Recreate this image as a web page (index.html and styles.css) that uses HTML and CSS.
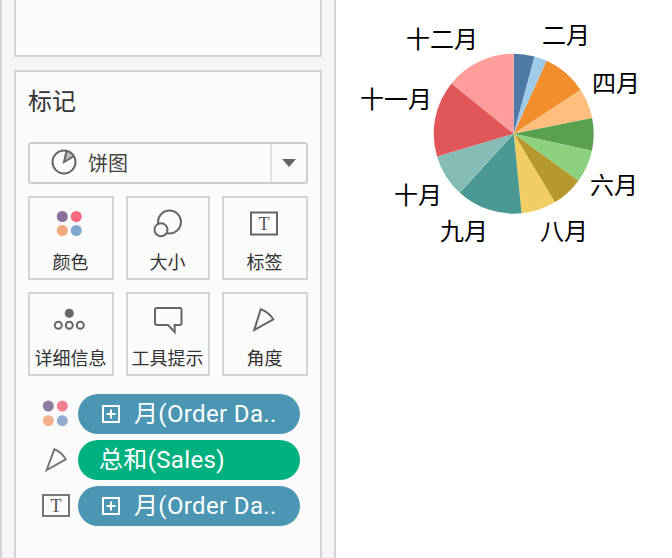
FILE: index.html
```html
<!DOCTYPE html>
<html lang="zh-CN">
<head>
<meta charset="utf-8">
<title>饼图</title>
<link rel="stylesheet" href="styles.css">
</head>
<body>
<aside class="sidebar">
  <div class="card card-top"></div>
  <section class="card card-marks">
    <h2 class="marks-title">标记</h2>
    <div class="select">
      <div class="select-main">
        <svg class="select-icon" width="26" height="26" viewBox="0 0 26 26"><path class="i-fill-light" d="M13 13L15.500 2.300A11 11 0 0 1 22.500 7.500Z"/><circle class="i-line" cx="13" cy="13" r="11.500"/><path class="i-line" d="M15.500 2.300L13 13L22.500 7.500"/></svg>
        <span class="select-text">饼图</span>
      </div>
      <div class="select-arrow"><span class="caret"></span></div>
    </div>
    <div class="btn-grid">
      <div class="mark-btn">
        <svg class="btn-icon" width="40" height="40" viewBox="0 0 40 40"><circle cx="11.300" cy="12.500" r="5.500" fill="#8b6f9b"/><circle cx="25.300" cy="12.500" r="5.500" fill="#f6697f"/><circle cx="11.300" cy="26.500" r="5.500" fill="#f3a97c"/><circle cx="25.300" cy="26.500" r="5.500" fill="#7fa8d0"/></svg>
        <span>颜色</span>
      </div>
      <div class="mark-btn">
        <svg class="btn-icon" width="40" height="40" viewBox="0 0 40 40"><circle class="i-line" cx="21.500" cy="18" r="11.500"/><circle class="i-white" cx="13" cy="25.700" r="6.500"/></svg>
        <span>大小</span>
      </div>
      <div class="mark-btn">
        <svg class="btn-icon" width="40" height="40" viewBox="0 0 40 40"><rect class="i-line" x="6" y="8.500" width="26" height="22"/><text class="i-t" x="19" y="26" text-anchor="middle">T</text></svg>
        <span>标签</span>
      </div>
      <div class="mark-btn">
        <svg class="btn-icon" width="40" height="40" viewBox="0 0 40 40"><circle cx="18.300" cy="13.300" r="4.500" fill="#666"/><circle class="i-line" cx="7.300" cy="25.300" r="3.500"/><circle class="i-line" cx="18.300" cy="25.300" r="3.500"/><circle class="i-line" cx="29.300" cy="25.300" r="3.500"/></svg>
        <span>详细信息</span>
      </div>
      <div class="mark-btn">
        <svg class="btn-icon" width="40" height="40" viewBox="0 0 40 40"><path class="i-line" d="M9 8H32Q33.500 8 33.500 10V23Q33.500 25 32 25H26.700V32L20 25H9Q7 25 7 23V10Q7 8 9 8Z"/></svg>
        <span>工具提示</span>
      </div>
      <div class="mark-btn">
        <svg class="btn-icon" width="40" height="40" viewBox="0 0 40 40"><path class="i-line" d="M15.700 9.300Q23.500 12 28.300 19.300L9.300 30Z"/></svg>
        <span>角度</span>
      </div>
    </div>
    <ul class="shelf">
      <li class="shelf-row">
        <svg class="shelf-icon" width="36" height="30" viewBox="0 0 36 30"><circle cx="14.300" cy="7" r="5.500" fill="#8f7da0"/><circle cx="28.300" cy="7" r="5.500" fill="#f4808f"/><circle cx="14.300" cy="21.700" r="5.500" fill="#f3b08a"/><circle cx="28.300" cy="21.700" r="5.500" fill="#92add0"/></svg>
        <div class="pill pill-blue">
          <svg class="plus" width="18" height="18" viewBox="0 0 18 18"><rect x="1" y="1" width="16" height="16"/><path d="M9 4.500V13.500M4.500 9H13.500"/></svg>
          <span class="pill-text">月(Order Da..</span>
        </div>
      </li>
      <li class="shelf-row">
        <svg class="shelf-icon" width="36" height="30" viewBox="0 0 36 30"><path class="i-line-grey" d="M20.300 4.300Q27.500 7 31.700 14.300L12.700 25Z"/></svg>
        <div class="pill pill-green"><span class="pill-text">总和(Sales)</span></div>
      </li>
      <li class="shelf-row">
        <svg class="shelf-icon" width="36" height="30" viewBox="0 0 36 30"><rect class="i-line-grey" x="9" y="4" width="26" height="21"/><text class="i-t" x="22" y="20.700" text-anchor="middle">T</text></svg>
        <div class="pill pill-blue">
          <svg class="plus" width="18" height="18" viewBox="0 0 18 18"><rect x="1" y="1" width="16" height="16"/><path d="M9 4.500V13.500M4.500 9H13.500"/></svg>
          <span class="pill-text">月(Order Da..</span>
        </div>
      </li>
    </ul>
  </section>
</aside>
<main class="viz">
  <svg class="pie-chart" width="336" height="558" viewBox="336 0 336 558">
    <g transform="translate(513.7 133.7)">
      <path fill="#4e79a7" d="M0 0V-80A80 80 0 0 1 20.900 -77.200Z"/>
      <path fill="#a0cbe8" d="M0 0L20.900 -77.200A80 80 0 0 1 33.050 -72.860Z"/>
      <path fill="#f28e2b" d="M0 0L33.050 -72.860A80 80 0 0 1 66.900 -43.800Z"/>
      <path fill="#ffbe7d" d="M0 0L66.900 -43.800A80 80 0 0 1 78.400 -15.800Z"/>
      <path fill="#59a14f" d="M0 0L78.400 -15.800A80 80 0 0 1 78.200 17Z"/>
      <path fill="#8cd17d" d="M0 0L78.200 17A80 80 0 0 1 64.700 47Z"/>
      <path fill="#b6992d" d="M0 0L64.700 47A80 80 0 0 1 41.100 68.600Z"/>
      <path fill="#f1ce63" d="M0 0L41.100 68.600A80 80 0 0 1 7.900 79.600Z"/>
      <path fill="#499894" d="M0 0L7.900 79.600A80 80 0 0 1 -53.900 59.100Z"/>
      <path fill="#86bcb6" d="M0 0L-53.900 59.100A80 80 0 0 1 -76.700 22.700Z"/>
      <path fill="#e15759" d="M0 0L-76.700 22.700A80 80 0 0 1 -62.200 -50.300Z"/>
      <path fill="#ff9d9a" d="M0 0L-62.200 -50.300A80 80 0 0 1 0 -80Z"/>
    </g>
    <g class="pie-labels">
      <text x="406" y="48">十二月</text>
      <text x="542" y="44">二月</text>
      <text x="592" y="92">四月</text>
      <text x="360" y="108">十一月</text>
      <text x="590" y="194">六月</text>
      <text x="394" y="204">十月</text>
      <text x="440" y="240">九月</text>
      <text x="540" y="240">八月</text>
    </g>
  </svg>
</main>
</body>
</html>
```

FILE: styles.css
```css
* { box-sizing: border-box; }
html, body { margin: 0; padding: 0; height: 100%; }
body {
  width: 672px;
  height: 558px;
  overflow: hidden;
  display: flex;
  background: #fff;
  font-family: "Noto Sans CJK SC", "Noto Sans", sans-serif;
}
.sidebar {
  width: 336px;
  height: 558px;
  flex: none;
  overflow: hidden;
  background: #f5f5f5;
  border-left: 2px solid #d4d4d4;
  border-right: 2px solid #d4d4d4;
  padding: 0 12px;
  display: flex;
  flex-direction: column;
  gap: 13px;
}
.card {
  width: 308px;
  background: #fbfbfb;
  border: 2px solid #d4d4d4;
}
.card-top { height: 57px; border-top: none; flex: none; }
.card-marks { flex: 1 0 auto; height: 520px; padding: 0 12px; border-bottom: none; }
.marks-title {
  margin: 10px 0 24px;
  font-size: 24px;
  line-height: 36px;
  font-weight: 400;
  color: #333;
}
.select {
  height: 42px;
  display: flex;
  background: #fbfbfb;
  border: 2px solid #ccc;
  border-radius: 3px;
  color: #444;
  font-size: 20px;
}
.select-main {
  flex: 1;
  display: flex;
  align-items: center;
  gap: 11px;
  padding-left: 21px;
}
.select-icon { margin-bottom: 3px; flex: none; }
.select-text { margin-bottom: 2px; }
.select-arrow {
  width: 36px;
  border-left: 2px solid #e2e2e2;
  display: flex;
  align-items: center;
  justify-content: center;
}
.caret {
  width: 0;
  height: 0;
  border-left: 7px solid transparent;
  border-right: 7px solid transparent;
  border-top: 8px solid #666;
}
.btn-grid {
  margin-top: 12px;
  display: grid;
  grid-template-columns: 86px 84px 86px;
  grid-auto-rows: 84px;
  gap: 12px;
}
.mark-btn {
  border: 2px solid #d4d4d4;
  display: flex;
  flex-direction: column;
  align-items: center;
  padding-right: 1px;
  color: #333;
  font-size: 18px;
  line-height: 26px;
}
.btn-icon { margin-top: 6px; flex: none; }
.mark-btn span { margin-top: 4px; white-space: nowrap; }
.i-line { fill: none; stroke: #666; stroke-width: 2; }
.i-line-grey { fill: none; stroke: #777; stroke-width: 2; }
.i-white { fill: #fbfbfb; stroke: #666; stroke-width: 2; }
.i-fill-light { fill: #bbb; }
.i-t { font-family: "Liberation Serif", serif; font-size: 18px; fill: #555; }
.shelf {
  list-style: none;
  margin: 18px 0 0;
  padding: 0;
  display: flex;
  flex-direction: column;
  gap: 6px;
}
.shelf-row { display: flex; align-items: center; height: 40px; }
.shelf-icon { width: 36px; flex: none; margin-left: 6px; margin-right: 8px; }
.pill {
  width: 222px;
  height: 40px;
  border-radius: 20px;
  display: flex;
  align-items: center;
  gap: 14px;
  padding-left: 24px;
  color: #fff;
  font-family: Roboto, "Noto Sans CJK SC", sans-serif;
  font-size: 24px;
  white-space: nowrap;
}
.pill-text { margin-bottom: 5px; letter-spacing: 0.35px; }
.pill-blue { background: #4b96b3; }
.pill-green { background: #00b180; padding-left: 21px; }
.plus { flex: none; fill: none; stroke: #fff; stroke-width: 2; }
.viz { flex: 1; height: 558px; }
.pie-chart { display: block; }
.pie-labels text {
  font-family: "Noto Sans CJK SC", sans-serif;
  font-size: 24px;
  fill: #000;
}
```
